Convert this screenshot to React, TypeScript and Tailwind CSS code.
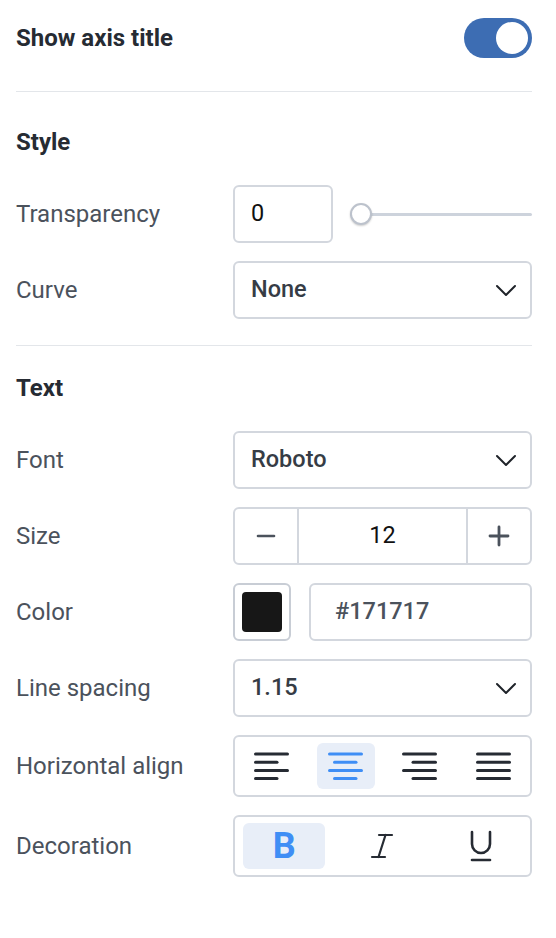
import React, { useState } from "react";

const font = { fontFamily: "Roboto, 'Noto Sans', sans-serif" };

function Chevron() {
  return (
    <svg width="22" height="13" viewBox="0 0 22 13" fill="none" stroke="#1f2329" strokeWidth="2" strokeLinecap="round" strokeLinejoin="round">
      <path d="M2 2l9 9 9-9" />
    </svg>
  );
}

function Select({ value }: { value: string }) {
  return (
    <div className="flex h-[58px] flex-1 items-center justify-between rounded-md border-2 border-[#d3d7de] bg-white pl-4 pr-[13px]">
      <span className="text-[23.5px] font-medium text-[#363c45]">{value}</span>
      <Chevron />
    </div>
  );
}

function Row({ label, children, mt = "mt-[18px]" }: { label: string; children: React.ReactNode; mt?: string }) {
  return (
    <div className={`flex items-center ${mt}`}>
      <div className="w-[217px] shrink-0 text-[24px] text-[#4b525c]">{label}</div>
      <div className="flex flex-1 items-center">{children}</div>
    </div>
  );
}

function AlignIcon({ kind, active }: { kind: "left" | "center" | "right" | "justify"; active?: boolean }) {
  const c = active ? "#3f8ef5" : "#262b33";
  const lines: [number, number][] =
    kind === "left"
      ? [[1.5, 33.5], [1.5, 23], [1.5, 33.5], [1.5, 23]]
      : kind === "center"
      ? [[1.5, 33.5], [6.5, 28], [1.5, 33.5], [6.5, 28]]
      : kind === "right"
      ? [[1.5, 33.5], [11, 33.5], [1.5, 33.5], [11, 33.5]]
      : [[1.5, 33.5], [1.5, 33.5], [1.5, 33.5], [1.5, 33.5]];
  return (
    <svg width="35" height="30" viewBox="0 0 35 30" fill="none" stroke={c} strokeWidth="3" strokeLinecap="round">
      {lines.map(([a, b], i) => (
        <line key={i} x1={a} x2={b} y1={3 + i * 8.2} y2={3 + i * 8.2} />
      ))}
    </svg>
  );
}

export default function App() {
  const [on, setOn] = useState(true);
  const [align, setAlign] = useState("center");
  const [size, setSize] = useState(12);

  return (
    <div className="min-h-[938px] w-full bg-white pl-4 pr-6 pt-[18px]" style={font}>
      {/* Show axis title */}
      <div className="flex h-10 items-center justify-between">
        <span className="text-[24px] font-bold text-[#262b33]">Show axis title</span>
        <button
          onClick={() => setOn(!on)}
          className="flex h-10 w-[68px] items-center justify-end rounded-full bg-[#3d6db3] p-[4px]"
        >
          <span className="h-8 w-8 rounded-full bg-white" />
        </button>
      </div>

      <div className="mt-[33px] h-px bg-[#e3e6ea]" />

      {/* Style */}
      <div className="mt-[36px] h-7 text-[24px] font-bold leading-7 text-[#262b33]">Style</div>

      <Row label="Transparency" mt="mt-[29px]">
        <div className="flex h-[58px] w-[100px] items-center rounded-md border-2 border-[#d3d7de] px-[16px] text-[23.5px] text-[#111]">
          0
        </div>
        <div className="relative ml-[17px] flex h-6 flex-1 items-center">
          <div className="h-[3px] w-full rounded-full bg-[#cdd3dc]" />
          <div className="absolute left-0 top-[1px] h-[22px] w-[22px] rounded-full border-2 border-[#bcc2cc] bg-white shadow-[0_1px_2px_rgba(0,0,0,0.2)]" />
        </div>
      </Row>

      <Row label="Curve">
        <Select value="None" />
      </Row>

      <div className="mt-[26px] h-px bg-[#e3e6ea]" />

      {/* Text */}
      <div className="mt-[28px] h-7 text-[24px] font-bold leading-7 text-[#262b33]">Text</div>

      <Row label="Font" mt="mt-[29px]">
        <Select value="Roboto" />
      </Row>

      <Row label="Size">
        <div className="flex h-[58px] flex-1 rounded-md border-2 border-[#d3d7de]">
          <button onClick={() => setSize(size - 1)} className="flex w-[64px] items-center justify-center border-r-2 border-[#d3d7de]">
            <svg width="20" height="20" viewBox="0 0 20 20" stroke="#4b525c" strokeWidth="2.6" strokeLinecap="round">
              <line x1="2" y1="10" x2="18" y2="10" />
            </svg>
          </button>
          <div className="flex flex-1 items-center justify-center text-[23.5px] text-[#111]">{size}</div>
          <button onClick={() => setSize(size + 1)} className="flex w-[64px] items-center justify-center border-l-2 border-[#d3d7de]">
            <svg width="22" height="22" viewBox="0 0 22 22" stroke="#4b525c" strokeWidth="2.8" strokeLinecap="round">
              <line x1="2" y1="11" x2="20" y2="11" />
              <line x1="11" y1="2" x2="11" y2="20" />
            </svg>
          </button>
        </div>
      </Row>

      <Row label="Color">
        <div className="flex h-[58px] w-[58px] items-center justify-center rounded-md border-2 border-[#c8cdd5]">
          <div className="h-10 w-10 rounded-[4px] bg-[#171717]" />
        </div>
        <div className="ml-[18px] flex h-[58px] flex-1 items-center rounded-md border-2 border-[#d3d7de] pl-[24px] text-[23.5px] font-medium text-[#4b525c]">
          #171717
        </div>
      </Row>

      <Row label="Line spacing">
        <Select value="1.15" />
      </Row>

      <Row label="Horizontal align">
        <div className="grid h-[62px] flex-1 grid-cols-4 gap-4 rounded-md border-2 border-[#d3d7de] px-2 py-[6px]">
          {(["left", "center", "right", "justify"] as const).map((k) => (
            <button
              key={k}
              onClick={() => setAlign(k)}
              className={`flex items-center justify-center rounded-md ${align === k ? "bg-[#e8eef8]" : ""}`}
            >
              <AlignIcon kind={k} active={align === k} />
            </button>
          ))}
        </div>
      </Row>

      <Row label="Decoration">
        <div className="grid h-[62px] flex-1 grid-cols-3 gap-4 rounded-md border-2 border-[#d3d7de] px-2 py-[6px]">
          <button className="flex items-center justify-center rounded-md bg-[#e8eef8]">
            <span className="text-[36px] font-bold leading-none text-[#3f8ef5]">B</span>
          </button>
          <button className="flex items-center justify-center">
            <svg width="24" height="28" viewBox="0 0 24 28" fill="none" stroke="#262b33" strokeWidth="2.2" strokeLinecap="round">
              <line x1="9" y1="3" x2="22" y2="3" />
              <line x1="2" y1="25" x2="15" y2="25" />
              <line x1="15.5" y1="3" x2="8.5" y2="25" />
            </svg>
          </button>
          <button className="flex items-center justify-center">
            <svg width="24" height="32" viewBox="0 0 24 32" fill="none" stroke="#262b33" strokeWidth="2.6" strokeLinecap="round">
              <path d="M3 2v12a9 9 0 0 0 18 0V2" />
              <line x1="3" y1="30" x2="21" y2="30" />
            </svg>
          </button>
        </div>
      </Row>
    </div>
  );
}
